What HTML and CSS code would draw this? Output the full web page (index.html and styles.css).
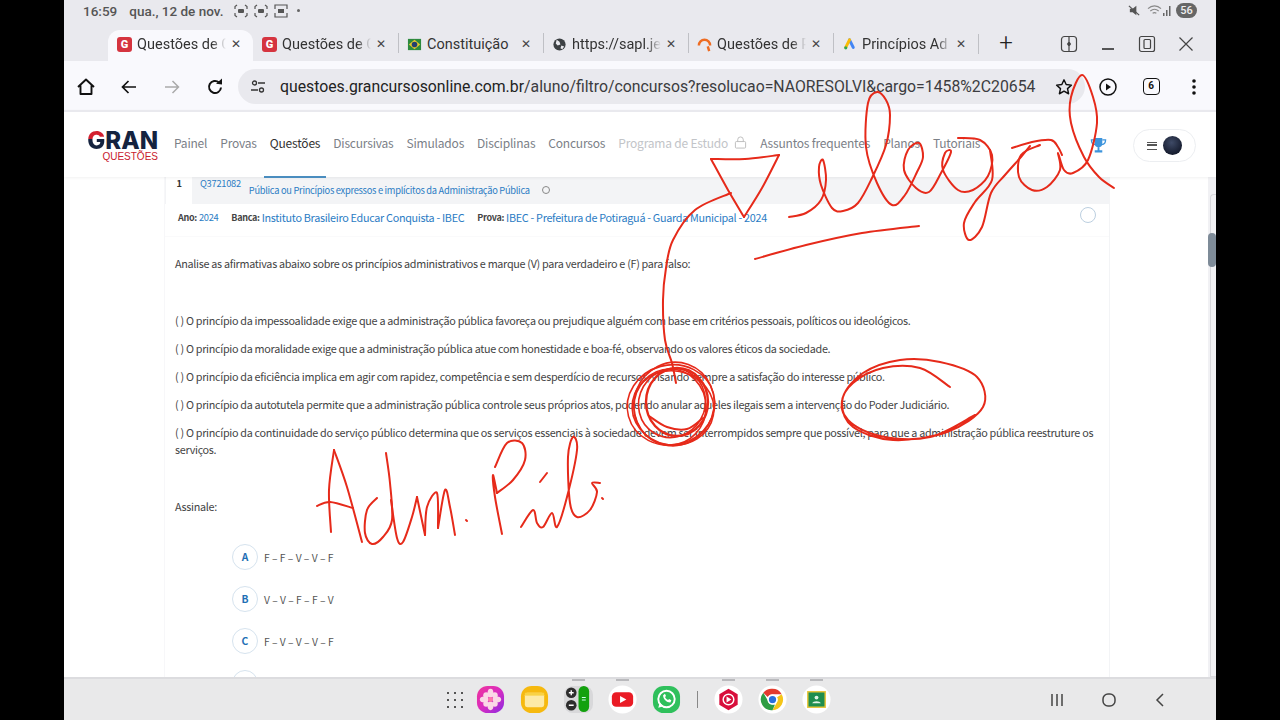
FILE: index.html
```html
<!DOCTYPE html>
<html lang="pt-BR">
<head>
    <meta charset="UTF-8">
    <title>Questões de Concursos</title>
    <link rel="stylesheet" href="styles.css">
</head>
<body>
<div class="tablet">

    <div class="status-bar">
        <span class="clock">16:59</span>
        <span class="date">qua., 12 de nov.</span>
        <span class="status-icons">
            <svg class="st-icon" viewBox="0 0 14 14"><path d="M1 5V2.500L3 1M13 5V2.500L11 1M1 9v2.500L3 13M13 9v2.500L11 13" /><rect x="4" y="5" width="6" height="4" rx="1" fill="#555" stroke="none"/></svg>
            <svg class="st-icon" viewBox="0 0 14 14"><path d="M1 5V2.500L3 1M13 5V2.500L11 1M1 9v2.500L3 13M13 9v2.500L11 13" /><rect x="4" y="5" width="6" height="4" rx="1" fill="#555" stroke="none"/></svg>
            <svg class="st-icon" viewBox="0 0 14 14"><path d="M1 5V1h12v4M1 9v4h12V9" /><rect x="4" y="5" width="6" height="4" fill="#555" stroke="none"/></svg>
            <span class="st-dot"></span>
        </span>
        <span class="status-right">
            <svg class="st-mute" viewBox="0 0 14 14"><path d="M2 5h3l4-3v10L5 9H2z" fill="#555"/><path d="M1 2l11 10" stroke="#555" stroke-width="1.400"/></svg>
            <svg class="st-wifi" viewBox="0 0 16 14"><path d="M1 5c4-4 10-4 14 0M3.500 7.500c3-2.500 6-2.500 9 0M6 10c1.500-1 2.500-1 4 0" fill="none" stroke="#888" stroke-width="1.200"/></svg>
            <svg class="st-signal" viewBox="0 0 10 12"><path d="M1 8h1.500v3H1zM4 5h1.500v6H4zM7 1h1.500v10H7z" fill="#666"/></svg>
            <span class="battery">56</span>
        </span>
    </div>

    <div class="tab-strip">
        <div class="tab active">
            <span class="fav fav-gran">G</span><span class="tab-title">Questões de C</span><span class="tab-x">✕</span>
        </div>
        <div class="tab">
            <span class="fav fav-gran">G</span><span class="tab-title">Questões de C</span><span class="tab-x">✕</span>
        </div>
        <div class="tab sep">
            <svg class="fav" viewBox="0 0 16 16"><rect x="1" y="2" width="14" height="12" fill="#2d8a3e"/><path d="M8 3l6 5-6 5-6-5z" fill="#e8c92c"/><circle cx="8" cy="8" r="3" fill="#24406f"/></svg>
            <span class="tab-title no-fade">Constituição</span><span class="tab-x">✕</span>
        </div>
        <div class="tab sep">
            <svg class="fav" viewBox="0 0 16 16"><circle cx="8" cy="8" r="6.500" fill="#3c4043"/><path d="M5 3l3 2 1 3-3 1-2-2zM10 9l3 1-2 3-2-1z" fill="#e9e9ee"/></svg>
            <span class="tab-title">https://sapl.je</span><span class="tab-x">✕</span>
        </div>
        <div class="tab sep">
            <svg class="fav" viewBox="0 0 16 16"><path d="M2 9a6 6 0 0 1 12 0M11.500 10l1.500 5" fill="none" stroke="#ee6c22" stroke-width="2.600"/></svg>
            <span class="tab-title">Questões de P</span><span class="tab-x">✕</span>
        </div>
        <div class="tab sep">
            <svg class="fav" viewBox="0 0 16 16"><path d="M8 3l4 8" stroke="#4285f4" stroke-width="3.200" stroke-linecap="round"/><path d="M8 3l-4 8" stroke="#fbbc04" stroke-width="3.200" stroke-linecap="round"/><circle cx="4" cy="11.500" r="1.700" fill="#34a853"/></svg>
            <span class="tab-title">Princípios Ad</span><span class="tab-x">✕</span>
        </div>
        <div class="sep-line"></div>
        <span class="new-tab">+</span>
        <div class="win-controls">
            <svg class="win-icon" viewBox="0 0 18 18"><rect x="1.500" y="1.500" width="15" height="15" rx="3"/><path d="M9 2v5M9 11v5M9 7l-1 1.500h2zM9 11l-1-1.500h2z"/></svg>
            <svg class="win-icon" viewBox="0 0 18 18"><path d="M3 14h12" stroke-width="1.800"/></svg>
            <svg class="win-icon" viewBox="0 0 18 18"><rect x="1.500" y="1.500" width="15" height="15" rx="2"/><rect x="6" y="4.500" width="6.500" height="9" rx="1"/></svg>
            <svg class="win-icon" viewBox="0 0 18 18"><path d="M2.500 2.500l13 13M15.500 2.500l-13 13"/></svg>
        </div>
    </div>

    <div class="toolbar">
        <div class="nav-btns">
            <svg class="tb-icon" viewBox="0 0 20 20"><path d="M2 10l8-7.500L18 10M4.500 8.500V17h11V8.500" fill="none" stroke="#111" stroke-width="1.900" stroke-linejoin="round"/></svg>
            <svg class="tb-icon" viewBox="0 0 20 20"><path d="M17 10H4M9.500 4L3.500 10l6 6" fill="none" stroke="#111" stroke-width="1.700"/></svg>
            <svg class="tb-icon" viewBox="0 0 20 20"><path d="M3 10h13M10.500 4l6 6-6 6" fill="none" stroke="#aaa" stroke-width="1.500"/></svg>
            <svg class="tb-icon" viewBox="0 0 20 20"><path d="M16 10.500A6 6 0 1 1 14 5.500" fill="none" stroke="#111" stroke-width="2"/><path d="M11 6.800L17 7.500V1.500z" fill="#111"/></svg>
        </div>
        <div class="url-pill">
            <svg class="tune" viewBox="0 0 16 16"><circle cx="4.500" cy="4" r="2" fill="none" stroke="#333" stroke-width="1.300"/><path d="M8 4h7M1 11h7" stroke="#333" stroke-width="1.300"/><circle cx="11.500" cy="11" r="2" fill="none" stroke="#333" stroke-width="1.300"/></svg>
            <span class="url-text">questoes.grancursosonline.com.br<span class="url-dim">/aluno/filtro/concursos?resolucao=NAORESOLVI&amp;cargo=1458%2C20654</span></span>
            <svg class="star" viewBox="0 0 20 20"><path d="M10 2l2.400 5.300 5.800.6-4.300 3.900 1.200 5.700L10 14.600l-5.100 2.900 1.200-5.700L1.800 7.900l5.800-.6z" fill="none" stroke="#111" stroke-width="1.600" stroke-linejoin="round"/></svg>
        </div>
        <div class="tb-right">
            <svg class="tb-icon" viewBox="0 0 20 20"><circle cx="10" cy="10" r="8" fill="none" stroke="#111" stroke-width="1.500"/><path d="M8 6.500l5 3.500-5 3.500z" fill="#111"/></svg>
            <span class="tab-count">6</span>
            <svg class="tb-icon" viewBox="0 0 20 20"><circle cx="10" cy="4" r="1.800" fill="#111"/><circle cx="10" cy="10" r="1.800" fill="#111"/><circle cx="10" cy="16" r="1.800" fill="#111"/></svg>
        </div>
    </div>

    <header class="site-nav">
        <div class="logo">
            <span class="logo-main"><span class="logo-g">G</span>RAN</span>
            <span class="logo-sub">QUESTÕES</span>
        </div>
        <nav class="menu">
            <a>Painel</a>
            <a>Provas</a>
            <a class="current">Questões</a>
            <a>Discursivas</a>
            <a>Simulados</a>
            <a>Disciplinas</a>
            <a>Concursos</a>
            <a class="locked">Programa de Estudo
                <svg class="lock" viewBox="0 0 14 14"><rect x="1.500" y="6" width="11" height="7" rx="1" fill="none" stroke="#bbb"/><path d="M4 6V4a3 3 0 0 1 6 0v2" fill="none" stroke="#bbb"/></svg>
            </a>
            <a>Assuntos frequentes</a>
            <a>Planos</a>
            <a>Tutoriais</a>
        </nav>
        <svg class="trophy" viewBox="0 0 18 18"><path d="M5 1h8v6a4 4 0 0 1-8 0zM8 11h2v3H8zM5 14h8v2.500H5z" fill="#3d94dc"/><path d="M5 3H1.500c0 3 1.500 5 4 5M13 3h3.500c0 3-1.500 5-4 5" fill="none" stroke="#3d94dc" stroke-width="1.400"/></svg>
        <div class="user-pill">
            <span class="burger"></span>
            <span class="avatar"></span>
        </div>
    </header>

    <main class="page">
        <section class="card">
            <div class="q-head">
                <span class="q-num">1</span>
                <a class="q-code">Q3721082</a>
                <a class="q-subject">Pública ou Princípios expressos e implícitos da Administração Pública</a>
                <span class="q-more"></span>
            </div>
            <div class="q-info">
                <span class="lbl">Ano:</span> <a class="small-link">2024</a>
                <span class="lbl lbl-banca">Banca:</span> <a>Instituto Brasileiro Educar Conquista - IBEC</a>
                <span class="lbl lbl-prova">Prova:</span> <a>IBEC - Prefeitura de Potiraguá - Guarda Municipal - 2024</a>
                <span class="q-radio"></span>
            </div>
            <div class="q-body">
                <p class="intro">Analise as afirmativas abaixo sobre os princípios administrativos e marque (V) para verdadeiro e (F) para falso:</p>
                <p>( ) O princípio da impessoalidade exige que a administração pública favoreça ou prejudique alguém com base em critérios pessoais, políticos ou ideológicos.</p>
                <p>( ) O princípio da moralidade exige que a administração pública atue com honestidade e boa-fé, observando os valores éticos da sociedade.</p>
                <p>( ) O princípio da eficiência implica em agir com rapidez, competência e sem desperdício de recursos, visando sempre a satisfação do interesse público.</p>
                <p>( ) O princípio da autotutela permite que a administração pública controle seus próprios atos, podendo anular aqueles ilegais sem a intervenção do Poder Judiciário.</p>
                <p class="last">( ) O princípio da continuidade do serviço público determina que os serviços essenciais à sociedade devem ser interrompidos sempre que possível, para que a administração pública reestruture os serviços.</p>
                <p class="assinale">Assinale:</p>
                <div class="options">
                    <div class="option"><span class="letter">A</span><span>F – F – V – V – F</span></div>
                    <div class="option"><span class="letter">B</span><span>V – V – F – F – V</span></div>
                    <div class="option"><span class="letter">C</span><span>F – V – V – V – F</span></div>
                    <div class="option"><span class="letter"></span></div>
                </div>
            </div>
        </section>
        <div class="scroll-gutter"><span class="scroll-track"></span><span class="scroll-thumb"></span></div>
    </main>

    <footer class="dock">
        <div class="dock-apps">
            <span class="app-grid"><i></i><i></i><i></i><i></i><i></i><i></i><i></i><i></i><i></i></span>
            <svg class="app" viewBox="0 0 30 30">
                <defs><linearGradient id="galleryBg" x1="0" y1="0" x2="1" y2="1"><stop offset="0" stop-color="#f0359a"/><stop offset=".5" stop-color="#d92cc0"/><stop offset="1" stop-color="#8a2be2"/></linearGradient></defs>
                <rect x="1" y="1" width="28" height="28" rx="11" fill="url(#galleryBg)"/>
                <g fill="#fbd7e6"><ellipse cx="15" cy="8.500" rx="3" ry="4.500"/><ellipse cx="15" cy="21.500" rx="3" ry="4.500"/><ellipse cx="8.500" cy="15" rx="4.500" ry="3"/><ellipse cx="21.500" cy="15" rx="4.500" ry="3"/><ellipse cx="10.500" cy="10.500" rx="3" ry="3"/><ellipse cx="19.500" cy="10.500" rx="3" ry="3"/><ellipse cx="10.500" cy="19.500" rx="3" ry="3"/><ellipse cx="19.500" cy="19.500" rx="3" ry="3"/></g>
                <circle cx="15" cy="15" r="2.500" fill="#f7a"/>
            </svg>
            <svg class="app" viewBox="0 0 30 30"><rect x="1" y="1" width="28" height="28" rx="11" fill="#f6b90f"/><rect x="5" y="8" width="20" height="15" rx="2.500" fill="#fdeaa6"/><rect x="5" y="8" width="20" height="3" fill="#f9d244"/></svg>
            <span class="app-wrap running">
                <svg class="app" viewBox="0 0 30 30"><rect x="0" y="1" width="30" height="28" rx="9" fill="#d8d8da"/><circle cx="7.500" cy="8" r="5.500" fill="#2d2d2d"/><circle cx="7.500" cy="21" r="5.500" fill="#2d2d2d"/><path d="M5 8h5M7.500 5.500v5M5 21h5" stroke="#fff" stroke-width="1.400"/><rect x="15" y="1" width="11" height="27" rx="5.500" fill="#12a10e"/><path d="M18.500 13h4M18.500 15.500h4" stroke="#cfe" stroke-width="1.100"/></svg>
            </span>
            <span class="app-wrap running">
                <svg class="app" viewBox="0 0 30 30"><circle cx="15" cy="15" r="14.500" fill="#fff"/><rect x="4" y="7.500" width="22" height="15" rx="4.500" fill="#ea1b25"/><path d="M12.500 11.500l6.500 3.500-6.500 3.500z" fill="#fff"/></svg>
            </span>
            <svg class="app" viewBox="0 0 30 30"><rect x="1" y="1" width="28" height="28" rx="11" fill="#2fc05c"/><circle cx="15" cy="14.500" r="8.500" fill="none" stroke="#fff" stroke-width="2"/><path d="M8 18l-1.500 5.500 5.500-1.500z" fill="#fff"/><path d="M11.500 10.500c0 4 3.500 7.500 7.500 7.500l1-2.200-2.300-1.200-1 1c-1.500-.5-2.700-1.800-3.200-3.200l1-1-1.100-2.400z" fill="#fff"/></svg>
            <span class="dock-sep"></span>
            <span class="app-wrap running">
                <svg class="app" viewBox="0 0 30 30"><circle cx="15" cy="15" r="14.500" fill="#fff"/><path d="M15 4l9.500 5.500v11L15 26l-9.500-5.500v-11z" fill="#d80f3c"/><circle cx="15" cy="15" r="5.500" fill="none" stroke="#fff" stroke-width="1.500"/><path d="M13 12l5 3-5 3z" fill="#fff"/></svg>
            </span>
            <span class="app-wrap running">
                <svg class="app" viewBox="0 0 30 30"><circle cx="15" cy="15" r="14.500" fill="#fff"/><path d="M15 4a11 11 0 0 1 9.500 5.500H15a5.500 5.500 0 0 0-5 3L5.500 8A11 11 0 0 1 15 4z" fill="#e33b2e"/><path d="M24.500 9.500A11 11 0 0 1 15 26l4.500-7.800a5.500 5.500 0 0 0 .2-5.500z" fill="#f5c518"/><path d="M15 26A11 11 0 0 1 5.500 8L10 15.800a5.500 5.500 0 0 0 5.500 4.700h2z" fill="#2f9e44"/><circle cx="15" cy="15" r="4.500" fill="#2a6fdb" stroke="#fff" stroke-width="1.500"/></svg>
            </span>
            <span class="app-wrap running">
                <svg class="app" viewBox="0 0 30 30"><circle cx="15" cy="15" r="14.500" fill="#fff"/><rect x="6" y="7" width="18" height="16" fill="#1e8e4e" stroke="#e9c53a" stroke-width="1.500"/><circle cx="15" cy="13" r="2" fill="#dff3e4"/><path d="M10.500 19c1-3 8-3 9 0z" fill="#dff3e4"/></svg>
            </span>
        </div>
        <div class="sys-nav">
            <svg viewBox="0 0 16 16"><path d="M3 2v12M8 2v12M13 2v12" fill="none" stroke="#444" stroke-width="1.500"/></svg>
            <svg viewBox="0 0 16 16"><rect x="2" y="2" width="12" height="12" rx="5" fill="none" stroke="#444" stroke-width="1.500"/></svg>
            <svg viewBox="0 0 16 16"><path d="M11 2L5 8l6 6" fill="none" stroke="#444" stroke-width="1.500"/></svg>
        </div>
    </footer>
</div>

<!-- caneta por cima da tela -->
<svg id="ink" class="ink" viewBox="0 0 1280 720">
    <g fill="none" stroke="#e62a1a" stroke-width="1.600">
        <ellipse cx="671" cy="405" rx="44" ry="40" transform="rotate(-15 671 405)"/>
        <ellipse cx="674" cy="404" rx="40" ry="42" transform="rotate(20 674 404)"/>
        <ellipse cx="670" cy="407" rx="36" ry="38"/>
        <ellipse cx="672" cy="403" rx="33" ry="35" transform="rotate(30 672 403)"/>
        <ellipse cx="677" cy="402" rx="31" ry="34" stroke-width="2.400"/>
        <ellipse cx="673" cy="408" rx="41" ry="37" transform="rotate(10 673 408)"/>
    </g>
</svg>
<script src="ink.js"></script>
</body>
</html>
```

FILE: styles.css
```css
* {
    box-sizing: border-box;
}

html, body {
    margin: 0;
    height: 100%;
    overflow: hidden;
    background-color: #000;
}

body {
    position: relative;
    display: flex;
    justify-content: center;
    font-family: Roboto, "Liberation Sans", sans-serif;
    color: #333;
}

.tablet {
    width: 1152px;
    height: 720px;
    display: flex;
    flex-direction: column;
    background-color: #e9e9ee;
}

/* status bar */
.status-bar {
    height: 30px;
    flex: none;
    display: flex;
    align-items: center;
    padding: 0 19px 9px 19px;
    font-size: 13.5px;
    font-weight: 500;
    color: #555;
}

.date {
    margin-left: 12px;
}

.status-icons {
    display: flex;
    align-items: center;
    gap: 6px;
    margin-left: 11px;
}

.st-icon {
    width: 14px;
    height: 14px;
    fill: none;
    stroke: #555;
    stroke-width: 1.2;
}

.st-dot {
    width: 3px;
    height: 3px;
    margin-left: 3px;
    border-radius: 50%;
    background-color: #666;
}

.status-right {
    margin-left: auto;
    display: flex;
    align-items: center;
}

.st-mute {
    width: 13px;
    height: 13px;
    margin-right: 6px;
}

.st-wifi {
    width: 15px;
    height: 13px;
}

.st-signal {
    width: 10px;
    height: 12px;
    margin-right: 4px;
}

.battery {
    width: 21px;
    height: 15px;
    border-radius: 8px;
    background-color: #666;
    color: #eee;
    font-size: 11px;
    line-height: 15px;
    text-align: center;
}

/* tabs */
.tab-strip {
    height: 31px;
    flex: none;
    display: flex;
    align-items: center;
    padding-left: 44px;
}

.tab {
    width: 145px;
    height: 31px;
    flex: none;
    display: flex;
    align-items: center;
    padding: 0 10px 3px 9px;
    position: relative;
    font-size: 14.5px;
    color: #333;
}

.tab.sep::before,
.sep-line {
    content: "";
    width: 1px;
    height: 20px;
    background-color: #bfc0c5;
}

.tab.sep::before {
    position: absolute;
    left: 0;
    top: 3px;
}

.sep-line {
    flex: none;
    margin-bottom: 3px;
}

.tab.active {
    background-color: #f9f9fd;
    border-radius: 12px 12px 0 0;
}

.fav {
    width: 15px;
    height: 15px;
    flex: none;
    margin-right: 5px;
}

.fav-gran {
    border-radius: 3px;
    background-color: #d5343f;
    color: #fff;
    font-size: 11px;
    font-weight: 900;
    line-height: 15px;
    text-align: center;
}

.tab-title {
    flex: 1;
    min-width: 0;
    white-space: nowrap;
    -webkit-mask-image: linear-gradient(to right, #000 84%, transparent 100%);
    mask-image: linear-gradient(to right, #000 84%, transparent 100%);
}

.tab-title.no-fade {
    -webkit-mask-image: none;
    mask-image: none;
}

.tab-x {
    flex: none;
    width: 14px;
    margin-left: 3px;
    font-size: 12px;
    color: #444;
    text-align: center;
}

.new-tab {
    width: 16px;
    margin-left: 19px;
    margin-bottom: 5px;
    font-size: 24px;
    font-weight: 300;
    line-height: 24px;
    color: #222;
    text-align: center;
}

.win-controls {
    display: flex;
    gap: 21px;
    margin-left: 46px;
    margin-bottom: 4px;
}

.win-icon {
    width: 18px;
    height: 18px;
    fill: none;
    stroke: #444;
    stroke-width: 1.2;
}

/* toolbar */
.toolbar {
    height: 49px;
    flex: none;
    display: flex;
    align-items: center;
    padding: 2px 12px 0 12px;
    background-color: #f9f9fd;
}

.nav-btns {
    display: flex;
    gap: 23px;
    width: 162px;
}

.tb-icon {
    width: 20px;
    height: 20px;
    flex: none;
}

.url-pill {
    width: 847px;
    height: 35px;
    flex: none;
    display: flex;
    align-items: center;
    padding: 0 11px 0 12px;
    border-radius: 18px;
    background-color: #e9e9ee;
}

.tune {
    width: 16px;
    height: 16px;
    margin-right: 14px;
}

.url-text {
    flex: 1;
    font-size: 15.8px;
    color: #222;
    white-space: nowrap;
}

.url-dim {
    color: #3c3c40;
}

.star {
    width: 18px;
    height: 18px;
    margin-right: 1px;
}

.tb-right {
    display: flex;
    align-items: center;
    gap: 24.5px;
    margin-left: 13px;
}

.tab-count {
    width: 17px;
    height: 17px;
    border: 1.7px solid #111;
    border-radius: 4px;
    font-size: 10px;
    font-weight: 700;
    line-height: 14px;
    text-align: center;
    color: #111;
}

/* site header */
.site-nav {
    height: 67px;
    flex: none;
    display: flex;
    align-items: center;
    padding: 2px 20px 0 24px;
    border-top: 2px solid #e9e9ee;
    background-color: #fff;
    box-shadow: 0 1px 3px rgba(0, 0, 0, .06);
    position: relative;
    z-index: 2;
    font-family: "Noto Sans CJK SC", "Noto Sans", sans-serif;
}

.logo {
    width: 70px;
    display: flex;
    flex-direction: column;
    align-items: flex-end;
    font-family: Inter, "Liberation Sans", sans-serif;
}

.logo-main {
    font-size: 24px;
    font-weight: 800;
    line-height: 21px;
    color: #15233f;
}

.logo-g {
    background: linear-gradient(to bottom, #d3202f 45%, #15233f 45%);
    -webkit-background-clip: text;
    background-clip: text;
    color: transparent;
}

.logo-sub {
    font-family: "Liberation Sans", sans-serif;
    font-size: 10px;
    line-height: 10px;
    margin-top: 1px;
    color: #c8202e;
}

.menu {
    display: flex;
    align-items: center;
    gap: 13px;
    margin-left: 16px;
    margin-bottom: 7px;
    font-size: 12px;
    letter-spacing: -.2px;
    color: #7b8087;
    white-space: nowrap;
}

.menu .current {
    position: relative;
    color: #333;
}

.menu .current::after {
    content: "";
    position: absolute;
    left: -6px;
    right: -6px;
    top: 42px;
    height: 2px;
    background-color: #4a8dbf;
}

.menu .locked {
    display: flex;
    align-items: center;
    gap: 6px;
    color: #c2c4c8;
}

.lock {
    width: 13px;
    height: 13px;
}

.trophy {
    width: 17px;
    height: 17px;
    margin-left: auto;
    margin-right: 26px;
}

.user-pill {
    width: 63px;
    height: 33px;
    display: flex;
    align-items: center;
    gap: 6px;
    padding-left: 13px;
    border: 1px solid #eceef1;
    border-radius: 17px;
}

.burger {
    width: 10px;
    height: 8px;
    border-top: 1.5px solid #555;
    border-bottom: 1.5px solid #555;
    position: relative;
}

.burger::after {
    content: "";
    position: absolute;
    left: 0;
    right: 0;
    top: 1.5px;
    height: 1.5px;
    background-color: #555;
}

.avatar {
    width: 19px;
    height: 19px;
    border-radius: 50%;
    background: radial-gradient(circle at 45% 35%, #3e4a66, #141a2c 75%);
}

/* question */
.page {
    flex: 1;
    min-height: 0;
    display: flex;
    background-color: #fff;
    overflow: hidden;
    font-family: "Noto Sans CJK SC", "Noto Sans", sans-serif;
}

.card {
    width: 946px;
    margin-left: 100px;
    border-right: 1px solid #f3f4f6;
    border-left: 1px solid #f7f7f9;
}

.q-head {
    height: 27px;
    display: flex;
    background-color: #f3f4f6;
    font-size: 9.3px;
    letter-spacing: -.28px;
}

.q-num {
    width: 26px;
    margin-left: 1px;
    background-color: #fff;
    color: #333;
    font-weight: 700;
    line-height: 11px;
    padding-top: 1px;
    text-align: center;
}

.q-code {
    margin-left: 8px;
    color: #2b7cc4;
    line-height: 12px;
}

.q-subject {
    margin-left: 8px;
    padding-top: 6px;
    color: #2b7cc4;
    line-height: 14px;
}

.q-more {
    width: 8px;
    height: 8px;
    margin: 9px 0 0 12px;
    border: 1px solid #888;
    border-radius: 50%;
}

.q-info {
    height: 33px;
    display: flex;
    align-items: center;
    padding: 0 0 6px 13px;
    gap: 2px;
    font-size: 10.8px;
    letter-spacing: -.3px;
    color: #2b7cc4;
    white-space: nowrap;
    border-bottom: 1px solid #fafafb;
}

.lbl {
    color: #444;
    font-size: 9px;
    font-weight: 700;
}

.small-link {
    font-size: 9.3px;
}

.lbl-banca {
    margin-left: 11px;
}

.lbl-prova {
    margin-left: 11px;
}

.q-radio {
    width: 16px;
    height: 16px;
    margin-left: auto;
    margin-right: 13px;
    margin-top: -5px;
    border: 1px solid #bccfe0;
    border-radius: 50%;
}

.q-body {
    padding: 18px 12px 0 10px;
    font-size: 10.8px;
    letter-spacing: -.3px;
    line-height: 17px;
    color: #444;
}

.q-body p {
    margin: 0 0 11px;
}

.q-body .intro {
    margin-bottom: 40px;
}

.q-body .last {
    margin-bottom: 40px;
}

.q-body .assinale {
    margin-bottom: 29px;
}

.options {
    display: flex;
    flex-direction: column;
    gap: 16px;
    padding-left: 57px;
}

.option {
    display: flex;
    align-items: center;
    gap: 6px;
    font-size: 10.3px;
    letter-spacing: 0;
    color: #555;
}

.letter {
    width: 26px;
    height: 26px;
    border: 1px solid #d6e3ee;
    border-radius: 50%;
    color: #1f6fb5;
    font-weight: 700;
    line-height: 24px;
    text-align: center;
}

.scroll-gutter {
    width: 8px;
    margin-left: auto;
    position: relative;
    background-color: #f1f1f4;
}

.scroll-track {
    position: absolute;
    left: 2px;
    top: 17px;
    bottom: 0;
    width: 6px;
    border: 1px solid #d8d8dc;
    border-right: 0;
    border-radius: 4px 0 0 0;
}

.scroll-thumb {
    position: absolute;
    left: 0;
    top: 56px;
    width: 8px;
    height: 34px;
    border-radius: 4px;
    background-color: #7e8b98;
}

/* dock */
.dock {
    height: 43px;
    flex: none;
    display: flex;
    align-items: center;
    position: relative;
    padding-left: 383px;
    border-top: 2px solid #dcdcdf;
    background-color: #e9e9ea;
}

.dock-apps {
    display: flex;
    align-items: center;
    gap: 15px;
}

.app-grid {
    width: 16px;
    display: grid;
    grid-template-columns: repeat(3, 2px);
    justify-content: space-between;
    row-gap: 5px;
    margin-right: -2px;
}

.app-grid i {
    width: 2px;
    height: 2px;
    background-color: #555;
}

.app {
    width: 29px;
    height: 29px;
    display: block;
}

.app-wrap {
    position: relative;
}

.app-wrap.running::before {
    content: "";
    position: absolute;
    left: 8px;
    top: -6px;
    width: 13px;
    height: 2px;
    background-color: #b9b9bc;
}

.dock-sep {
    width: 1px;
    height: 17px;
    margin: 0 1px;
    background-color: #888;
}

.sys-nav {
    margin-left: auto;
    width: 119px;
    margin-right: 48px;
    display: flex;
    justify-content: space-between;
}

.sys-nav svg {
    width: 16px;
    height: 16px;
}

/* pen annotations */
.ink {
    position: absolute;
    left: 0;
    top: 0;
    width: 1280px;
    height: 720px;
    z-index: 5;
    pointer-events: none;
}
```

FILE: ink.js
```js
// tracos da caneta, em coordenadas da tela
const strokes = [
    // ilegal
    [[789,217],[806,213],[821,200],[826,180],[823,160],[819,167],[821,185],[832,208],[843,211],[858,203],[872,178],[886,145],[890,115],[886,100],[877,92],[868,103],[866,147],[877,183],[892,205],[905,195],[917,172],[923,157],[919,143],[908,150],[904,170],[916,188],[929,192],[941,173],[951,152],[945,153],[943,170],[958,190],[973,190],[988,176],[992,155],[980,140],[958,138]],
    [[990,150],[992,180],[975,202],[964,223],[969,240],[982,227],[991,193],[1005,175],[1021,157],[1030,146]],
    [[1012,148],[1032,142],[1051,140],[1058,147],[1062,155]],
    [[1040,145],[1021,155],[1019,177],[1032,190],[1047,187],[1060,170],[1058,153],[1064,170],[1073,173],[1088,160],[1097,123],[1093,97],[1082,75],[1071,97],[1071,123],[1084,157],[1099,177],[1114,188]],
    // sublinhado
    [[755,259],[806,245],[862,233],[919,226]],
    // seta
    [[711,159],[745,159],[779,155]],
    [[779,155],[762,188],[744,217]],
    [[744,217],[728,190],[711,159]],
    [[731,193],[695,210],[673,240],[666,268],[663,300],[665,340],[672,363],[676,383]],
    // circulo 1, traco interno
    [[649,416],[667,427],[687,429],[703,418]],
    // circulo 2
    [[950,387],[920,368],[883,368],[853,383],[842,403],[853,427],[893,440],[947,432],[983,407],[977,377],[940,362],[900,360],[863,373],[843,397],[848,420],[880,436],[930,437],[975,415]],
    // Adm. Pub.
    [[331,532],[329,490],[334,450]],
    [[334,450],[347,487],[362,542]],
    [[317,506],[330,502],[353,508]],
    [[377,498],[367,510],[365,533],[372,544],[383,537],[392,520],[390,483],[386,453]],
    [[391,500],[397,538],[403,542],[412,517],[417,497]],
    [[417,497],[425,535]],
    [[425,535],[427,507],[437,493],[438,528]],
    [[438,528],[445,490],[450,507],[455,535]],
    [[466,520],[467,521]],
    [[502,534],[495,497],[493,475],[497,493]],
    [[497,493],[513,480],[525,460],[522,443],[507,443],[495,467]],
    [[521,527],[533,510],[537,523],[543,527],[552,513],[557,527],[567,497],[577,450],[573,437],[568,457],[570,503],[577,517],[590,510],[597,492],[592,483],[600,483]],
    [[540,482],[547,473]],
    [[602,498],[603,499]]
];

function smoothPath(pts) {
    let d = 'M' + pts[0][0] + ' ' + pts[0][1];
    for (let i = 0; i < pts.length - 1; i++) {
        const p0 = pts[i - 1] || pts[i];
        const p1 = pts[i];
        const p2 = pts[i + 1];
        const p3 = pts[i + 2] || p2;
        const c1x = p1[0] + (p2[0] - p0[0]) / 6;
        const c1y = p1[1] + (p2[1] - p0[1]) / 6;
        const c2x = p2[0] - (p3[0] - p1[0]) / 6;
        const c2y = p2[1] - (p3[1] - p1[1]) / 6;
        d += 'C' + c1x + ' ' + c1y + ' ' + c2x + ' ' + c2y + ' ' + p2[0] + ' ' + p2[1];
    }
    return d;
}

const ink = document.getElementById('ink');
strokes.forEach(pts => {
    const path = document.createElementNS('http://www.w3.org/2000/svg', 'path');
    path.setAttribute('d', smoothPath(pts));
    path.setAttribute('fill', 'none');
    path.setAttribute('stroke', '#e62a1a');
    path.setAttribute('stroke-width', '2');
    path.setAttribute('stroke-linecap', 'round');
    path.setAttribute('stroke-linejoin', 'round');
    ink.appendChild(path);
});
```
